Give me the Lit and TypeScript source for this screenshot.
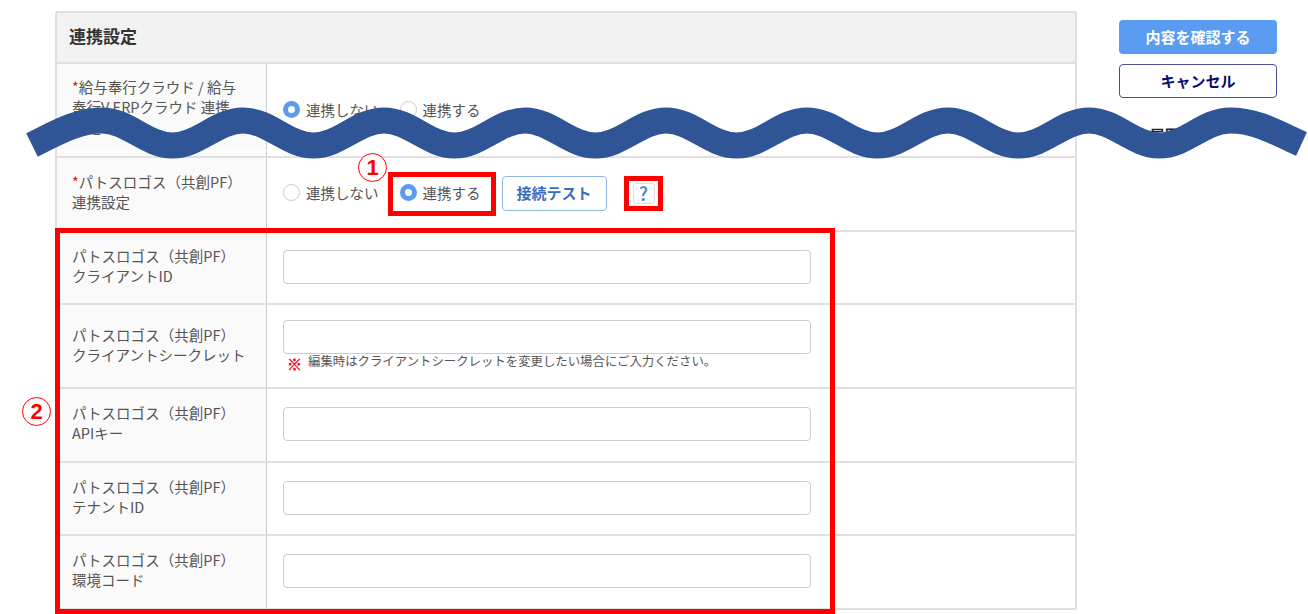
import { LitElement, html, css, svg } from "lit";
import { customElement } from "lit/decorators.js";

const wavePath = (): string => {
  let d = "M32 145 C58 132 78 120.5 102 120.5";
  let x = 102;
  let up = true;
  for (let i = 0; i < 16; i++) {
    const nx = x + 70.5;
    const y1 = up ? 120.5 : 145.5;
    const y2 = up ? 145.5 : 120.5;
    d += ` C${x + 26} ${y1} ${nx - 26} ${y2} ${nx} ${y2}`;
    x = nx;
    up = !up;
  }
  d += ` C${x + 26} 120.5 1275 132 1301.5 144`;
  return d;
};

@customElement("app-root")
export class AppRoot extends LitElement {
  static styles = css`
    :host {
      display: block;
      position: relative;
      width: 1308px;
      height: 614px;
      overflow: hidden;
      background: #fff;
      font-family: "Noto Sans CJK JP", "Noto Sans", sans-serif;
      font-size: 14.5px;
      color: #555;
    }
    .page {
      display: flex;
      align-items: flex-start;
      gap: 42px;
      padding: 11px 0 0 55px;
    }
    .table {
      width: 1022px;
      box-sizing: border-box;
      border: 2px solid #e0e0e0;
      border-radius: 2px;
      flex: none;
    }
    .head {
      height: 51px;
      box-sizing: border-box;
      padding: 0 0 4px 12px;
      display: flex;
      align-items: center;
      background: #f2f2f2;
      font-size: 17px;
      font-weight: 700;
      color: #333;
      border-bottom: 2px solid #e0e0e0;
    }
    .row {
      display: grid;
      grid-template-columns: 210px 1fr;
      border-bottom: 2px solid #e0e0e0;
    }
    .row:last-child { border-bottom: 0; }
    .h94 { height: 92px; }
    .h73 { height: 71.5px; }
    .h84 { height: 82px; }
    .label {
      position: relative;
      background: #fafafa;
      border-right: 1px solid #ccc;
      padding: 0 14px 3px 15px;
      display: flex;
      align-items: center;
      line-height: 20px;
      white-space: nowrap;
    }
    .label.cut {
      padding-bottom: 7px;
    }
    .label.cut::after {
      content: "";
      position: absolute;
      left: 0;
      right: -1px;
      bottom: 5px;
      height: 1px;
      background: #fff;
    }
    .value {
      padding: 0 16px 0.6px;
      display: flex;
      align-items: center;
    }
    .value.noted { padding-bottom: 2px; }
    .req { color: #e02020; }
    .radio {
      display: inline-flex;
      align-items: center;
      gap: 6px;
      margin-right: 21px;
      padding-bottom: 1px;
    }
    .dot {
      width: 17px;
      height: 17px;
      box-sizing: border-box;
      border-radius: 50%;
      border: 1px solid #ccc;
      background: #fff;
      flex: none;
    }
    .dot.on { border: 5px solid #5a9cf2; }
    .test {
      height: 35px;
      width: 105px;
      box-sizing: border-box;
      padding-bottom: 2px;
      display: flex;
      align-items: center;
      justify-content: center;
      border: 1px solid #8fb6e6;
      border-radius: 4px;
      color: #3a6fc0;
      font-weight: 700;
      font-size: 15px;
      background: #fff;
    }
    .help {
      width: 22px;
      height: 21px;
      box-sizing: border-box;
      margin-left: 26px;
      display: flex;
      align-items: center;
      justify-content: center;
      border: 1px solid #ddd;
      border-radius: 3px;
      color: #4a7fcb;
      font-weight: 500;
      font-size: 19px;
      line-height: 18px;
    }
    .field { width: 528px; }
    .input {
      width: 528px;
      height: 34px;
      box-sizing: border-box;
      border: 1px solid #ccc;
      border-radius: 4px;
      background: #fff;
    }
    .note {
      display: flex;
      align-items: flex-start;
      gap: 6px;
      font-size: 12.4px;
      line-height: 14px;
      white-space: nowrap;
    }
    .kome {
      color: #e8142a;
      font-size: 15px;
      font-weight: 900;
      -webkit-text-stroke: 0.5px #e8142a;
      margin: 3px 0 0 4px;
      line-height: 14px;
    }
    .side {
      width: 158px;
      flex: none;
      display: flex;
      flex-direction: column;
      gap: 10px;
      padding-top: 9px;
    }
    .btn {
      height: 34px;
      box-sizing: border-box;
      padding-bottom: 2px;
      border-radius: 4px;
      display: flex;
      align-items: center;
      justify-content: center;
      font-weight: 700;
      font-size: 15px;
    }
    .primary { background: #5a9cf2; color: #fff; }
    .cancel { background: #fff; border: 1px solid #4c4c9e; color: #0a0a6e; }
    .peek {
      font-size: 14.5px;
      line-height: 16px;
      font-weight: 700;
      color: #222;
      padding-left: 31px;
      margin-top: 19px;
    }
    .wave {
      position: absolute;
      inset: 0;
      width: 1308px;
      height: 614px;
      pointer-events: none;
    }
    .box {
      position: absolute;
      box-sizing: border-box;
      border: 5px solid #ff0000;
    }
    .b1 { left: 388px; top: 172px; width: 108px; height: 44px; }
    .b2 { left: 624px; top: 176px; width: 39px; height: 35px; }
    .b3 { left: 55px; top: 228px; width: 780px; height: 386px; }
    .num {
      position: absolute;
      width: 29px;
      height: 29px;
      box-sizing: border-box;
      border: 1px solid #ff0000;
      border-radius: 50%;
      background: #fff;
      color: #ff0000;
      font-family: "Liberation Sans", sans-serif;
      font-weight: 700;
      font-size: 22px;
      display: flex;
      align-items: center;
      justify-content: center;
    }
    .n1 { left: 358px; top: 153px; }
    .n2 { left: 22px; top: 397px; }
  `;

  private field(l1: string, l2: string, cls: string, note = false) {
    return html`<div class="row ${cls}">
      <div class="label"><div>${l1}<br />${l2}</div></div>
      <div class="value ${note ? "noted" : ""}">
        <div class="field">
          <div class="input"></div>
          ${note
            ? html`<div class="note"><span class="kome">※</span><span>編集時はクライアントシークレットを変更したい場合にご入力ください。</span></div>`
            : ""}
        </div>
      </div>
    </div>`;
  }

  render() {
    const pf = "パトスロゴス（共創PF）";
    return html`
      <div class="page">
        <div class="table">
          <div class="head">連携設定</div>
          <div class="row h94">
            <div class="label cut">
              <div><span class="req">*</span>給与奉行クラウド / 給与<br />奉行V ERPクラウド 連携<br />設定</div>
            </div>
            <div class="value">
              <span class="radio"><span class="dot on"></span>連携しない</span>
              <span class="radio"><span class="dot"></span>連携する</span>
            </div>
          </div>
          <div class="row h73">
            <div class="label"><div><span class="req">*</span>${pf}<br />連携設定</div></div>
            <div class="value">
              <span class="radio"><span class="dot"></span>連携しない</span>
              <span class="radio"><span class="dot on"></span>連携する</span>
              <span class="test">接続テスト</span>
              <span class="help">?</span>
            </div>
          </div>
          ${this.field(pf, "クライアントID", "h73")}
          ${this.field(pf, "クライアントシークレット", "h84", true)}
          ${this.field(pf, "APIキー", "h73")}
          ${this.field(pf, "テナントID", "h73")}
          ${this.field(pf, "環境コード", "h73")}
        </div>
        <div class="side">
          <div class="btn primary">内容を確認する</div>
          <div class="btn cancel">キャンセル</div>
          <div class="peek">履歴</div>
        </div>
      </div>
      <svg class="wave" viewBox="0 0 1308 614" aria-hidden="true">
        ${svg`<path d=${wavePath()} fill="none" stroke="#2f5597" stroke-width="26"/>`}
      </svg>
      <div class="box b1"></div>
      <div class="box b2"></div>
      <div class="box b3"></div>
      <div class="num n1">1</div>
      <div class="num n2">2</div>
    `;
  }
}
